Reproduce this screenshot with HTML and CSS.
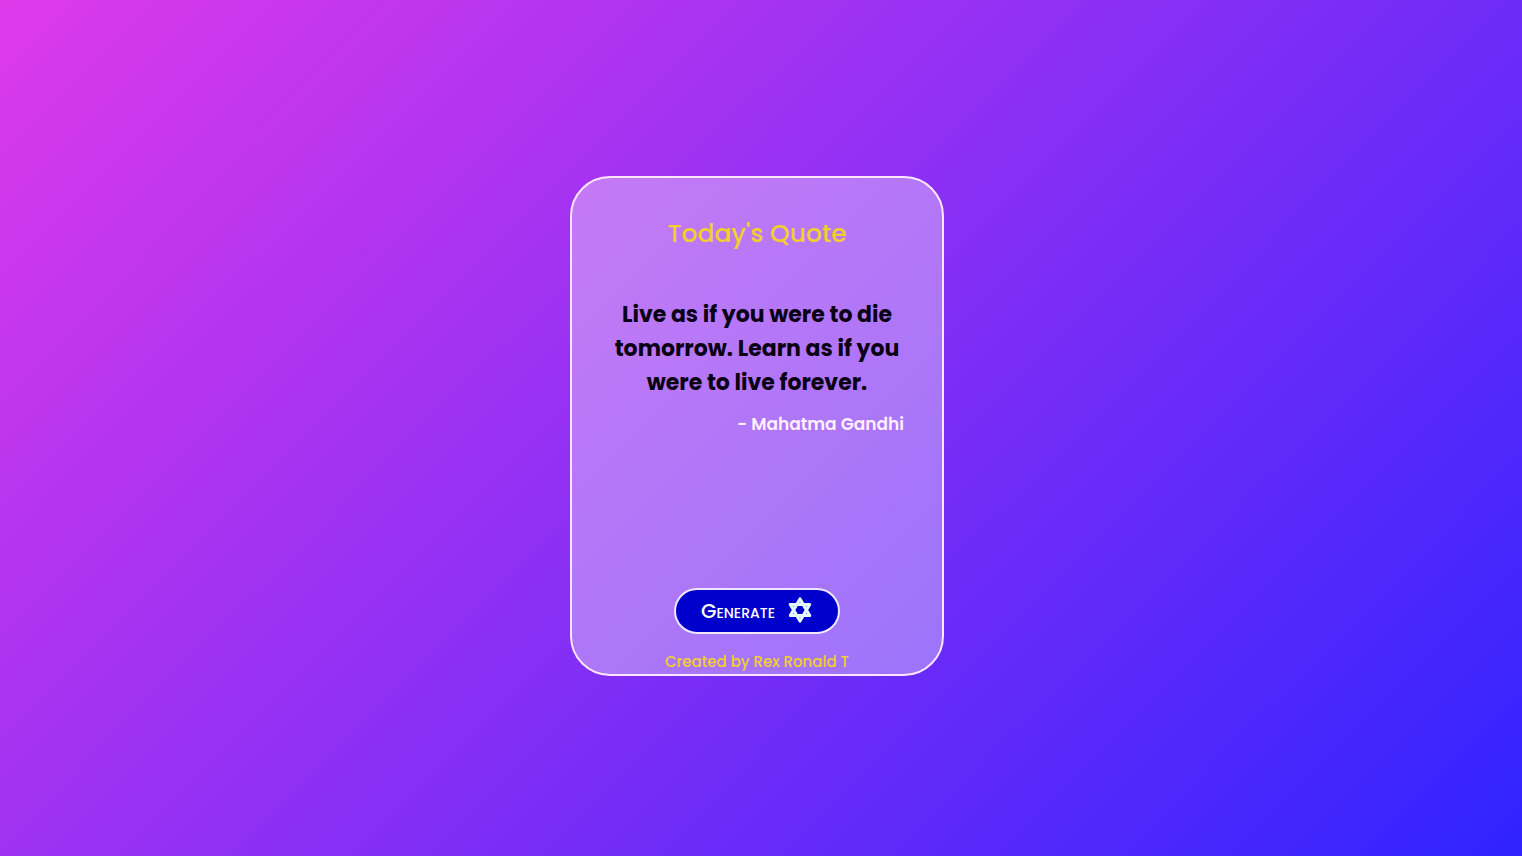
FILE: index.html
```html
<!DOCTYPE html>
<html lang="en">
<head>
<meta charset="utf-8">
<meta name="viewport" content="width=device-width, initial-scale=1">
<title>Today's Quote</title>
<link rel="stylesheet" href="styles.css">
</head>
<body>
<main class="card">
  <h1 class="title">Today's Quote</h1>
  <figure class="quote">
    <blockquote class="quote-text">Live as if you were to die tomorrow. Learn as if you were to live forever.</blockquote>
    <figcaption class="author">- Mahatma Gandhi</figcaption>
  </figure>
  <button class="generate" type="button">
    <span>Generate</span>
    <svg class="star" viewBox="0 0 26 26" aria-hidden="true">
      <path d="M13 2 L22.6 18.5 H3.4 Z M13 24 L3.4 7.5 H22.6 Z"/>
    </svg>
  </button>
  <footer class="credit">Created by Rex Ronald T</footer>
</main>
</body>
</html>
```
FILE: styles.css
```css
* {
  box-sizing: border-box;
}

body {
  margin: 0;
  min-height: 100vh;
  padding: 0 8px 4px 0;
  display: flex;
  align-items: center;
  justify-content: center;
  font-family: Poppins, Inter, sans-serif;
  background: linear-gradient(135deg, #de3aea, #2f23ff);
}

.card {
  width: 374px;
  max-width: 100%;
  min-height: 500px;
  padding: 36px 38px 0;
  display: flex;
  flex-direction: column;
  align-items: center;
  border: 2px solid #ffe6ff;
  border-radius: 40px;
  background: rgba(255, 255, 255, 0.35);
}

.title {
  margin: 0;
  font-size: 25px;
  line-height: 40px;
  font-weight: 500;
  color: #f2cf2e;
}

.quote {
  width: 100%;
  margin: 44px 0 auto;
}

.quote-text {
  margin: 0;
  font-size: 22px;
  line-height: 34px;
  font-weight: 700;
  text-align: center;
  color: #0a0014;
}

.author {
  margin-top: 11px;
  font-size: 17px;
  line-height: 26px;
  font-weight: 600;
  text-align: right;
  color: #fff0ff;
}

.generate {
  height: 46px;
  padding: 0 25px;
  display: flex;
  align-items: center;
  gap: 12px;
  border: 2px solid #f0e6ff;
  border-radius: 24px;
  background: #0000cd;
  color: #fff;
  font: inherit;
  font-size: 20px;
  font-weight: 500;
  font-variant: small-caps;
  cursor: pointer;
}

.star {
  width: 26px;
  height: 26px;
  margin-bottom: 3px;
  fill: none;
  stroke: #e6f8ff;
  stroke-width: 3.2;
  stroke-linejoin: round;
}

.credit {
  margin-top: 16px;
  font-size: 15px;
  line-height: 24px;
  font-weight: 500;
  color: #f2cf2e;
}
```
